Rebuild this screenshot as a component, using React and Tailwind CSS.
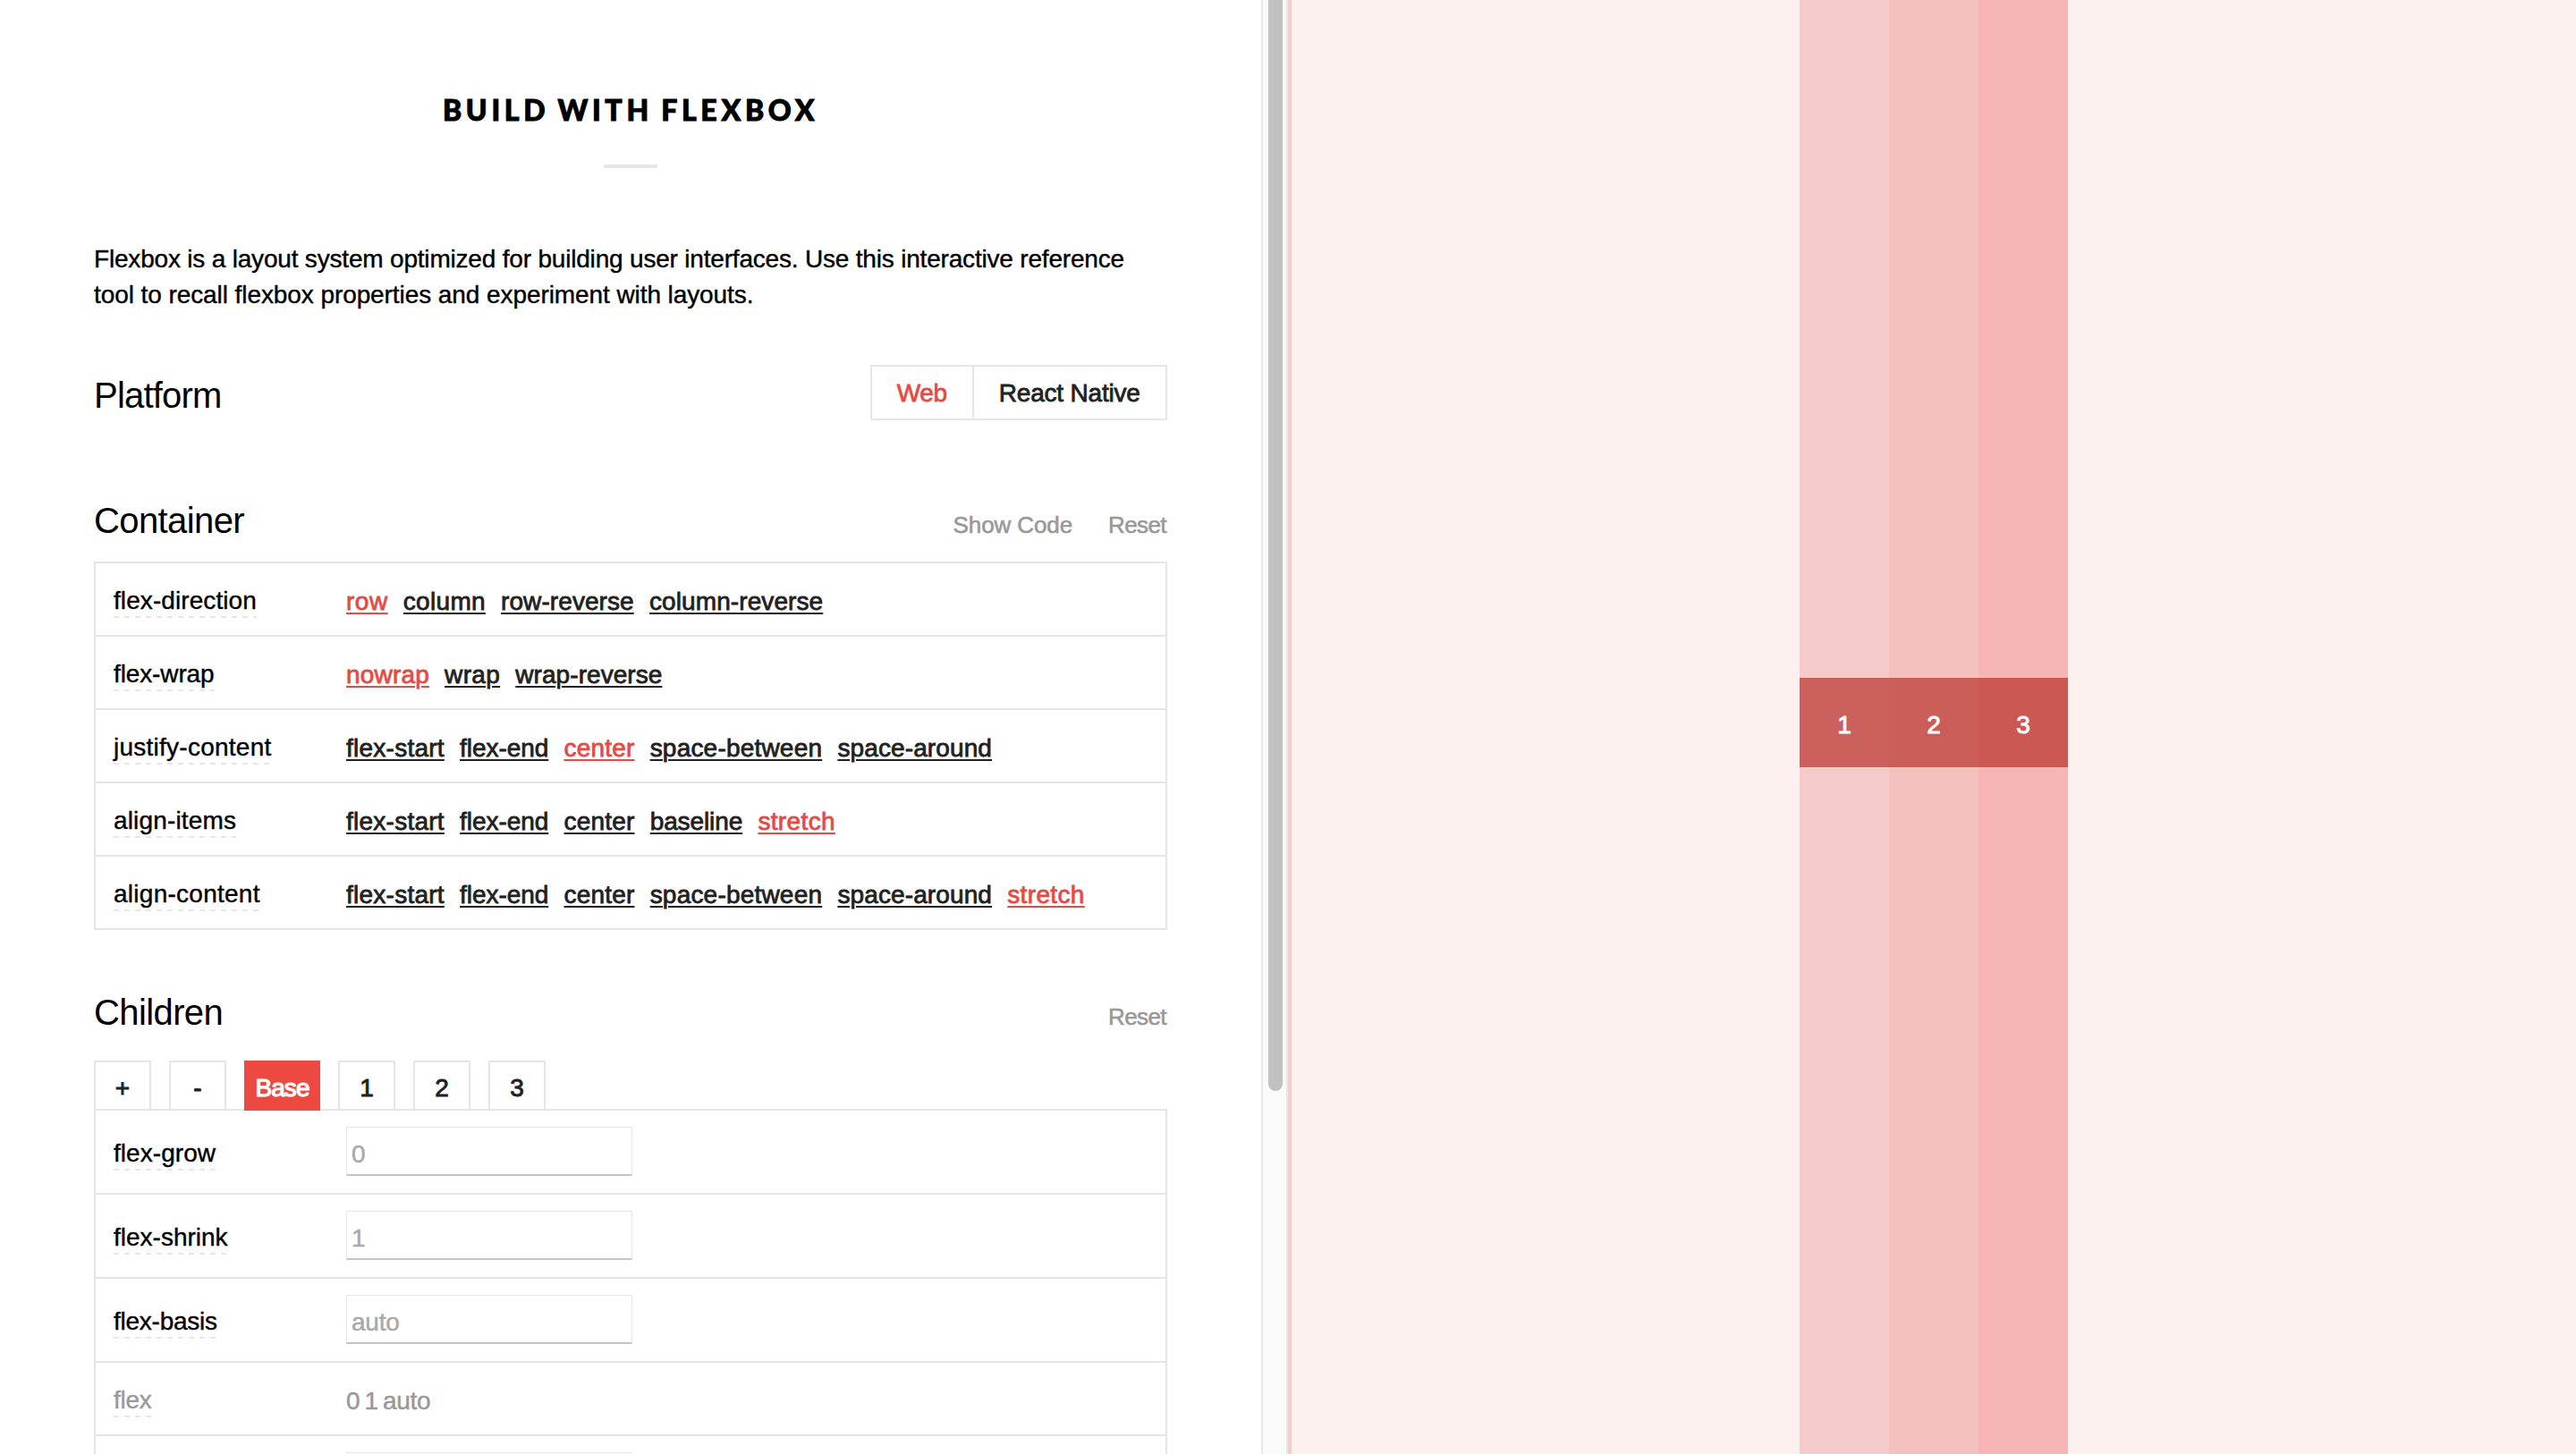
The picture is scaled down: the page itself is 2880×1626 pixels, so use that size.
import React from "react";

const containerRows = [
  {
    name: "flex-direction",
    tracking: "tracking-[0.08px]",
    selected: "row",
    options: [
      ["row", "tracking-[0.5px]"],
      ["column", "tracking-[0.3px]"],
      ["row-reverse", "tracking-[0.08px]"],
      ["column-reverse", "tracking-[0.1px]"],
    ],
  },
  {
    name: "flex-wrap",
    tracking: "tracking-[-0.12px]",
    selected: "nowrap",
    options: [
      ["nowrap", "tracking-[0.18px]"],
      ["wrap", "tracking-[0.33px]"],
      ["wrap-reverse", "tracking-[0.06px]"],
    ],
  },
  {
    name: "justify-content",
    tracking: "tracking-[0.25px]",
    selected: "center",
    options: [
      ["flex-start", "tracking-[0.25px]"],
      ["flex-end", "tracking-[-0.05px]"],
      ["center", "tracking-[0.2px]"],
      ["space-between", "tracking-[0.2px]"],
      ["space-around", "tracking-[0.12px]"],
    ],
  },
  {
    name: "align-items",
    tracking: "tracking-[0.15px]",
    selected: "stretch",
    options: [
      ["flex-start", "tracking-[0.25px]"],
      ["flex-end", "tracking-[-0.05px]"],
      ["center", "tracking-[0.2px]"],
      ["baseline", "tracking-[-0.1px]"],
      ["stretch", "tracking-[0.36px]"],
    ],
  },
  {
    name: "align-content",
    tracking: "tracking-[0.26px]",
    selected: "stretch",
    options: [
      ["flex-start", "tracking-[0.25px]"],
      ["flex-end", "tracking-[-0.05px]"],
      ["center", "tracking-[0.2px]"],
      ["space-between", "tracking-[0.2px]"],
      ["space-around", "tracking-[0.12px]"],
      ["stretch", "tracking-[0.36px]"],
    ],
  },
];

const childRows = [
  { name: "flex-grow", tracking: "tracking-[0.05px]", placeholder: "0" },
  { name: "flex-shrink", tracking: "tracking-[0px]", placeholder: "1" },
  { name: "flex-basis", tracking: "tracking-[-0.25px]", placeholder: "auto" },
];

const tabs = ["+", "-", "Base", "1", "2", "3"];

const previewItems = [
  { label: "1", column: "bg-[#f5caca]", box: "bg-[#ca615d]" },
  { label: "2", column: "bg-[#f4c1be]", box: "bg-[#ca5d58]" },
  { label: "3", column: "bg-[#f5b5b5]", box: "bg-[#cb5853]" },
];

function PropertyName({ children, tracking, muted }) {
  return (
    <div className="w-[260px] shrink-0">
      <span
        className={`inline-block h-[40px] bg-[repeating-linear-gradient(90deg,#e6e6e6_0_6px,transparent_6px_12px)] bg-[length:100%_2px] bg-bottom bg-no-repeat leading-[41px] [-webkit-text-stroke:0.4px] ${tracking} ${
          muted ? "text-[#999]" : "text-black"
        }`}
      >
        {children}
      </span>
    </div>
  );
}

function SectionHeader({ title, tracking, actions }) {
  return (
    <div className="flex h-[48px] items-baseline justify-between pr-[1px] leading-[48px]">
      <h2 className={`text-[40px] ${tracking}`}>{title}</h2>
      <div className="flex gap-[40px] text-[26px] text-[#999] [-webkit-text-stroke:0.6px]">
        {actions.map(([label, spacing]) => (
          <button key={label} className={`leading-[48px] ${spacing}`}>
            {label}
          </button>
        ))}
      </div>
    </div>
  );
}

function TextField({ placeholder }) {
  return (
    <input
      placeholder={placeholder}
      className="h-[55px] w-[320px] border border-[#e6e6e6] border-b-2 border-b-[#c4c4c4] bg-white px-[5px] pt-[7px] text-[28px] tracking-[-0.2px] [-webkit-text-stroke:0.5px] placeholder:text-[#a9a9a9] placeholder:opacity-100"
    />
  );
}

export default function App() {
  return (
    <div className="flex h-[1626px] w-[2880px] overflow-hidden bg-white font-['Liberation_Sans',Arial,sans-serif] text-[28px] text-black">
      <main className="h-full w-[1410px] shrink-0 overflow-hidden pl-[105px]">
        <div className="w-[1200px]">
          <header className="flex flex-col items-center pt-[98px]">
            <h1 className="h-[48px] whitespace-nowrap font-['Lato',sans-serif] text-[32px] font-black leading-[49px] tracking-[4.7px] [-webkit-text-stroke:1px] [word-spacing:-3px]">
              BUILD WITH FLEXBOX
            </h1>
            <div className="mt-[38px] h-[4px] w-[60px] bg-[#e6e6e6]" />
          </header>

          <p className="mt-[82px] h-[80px] whitespace-nowrap leading-[40px] [-webkit-text-stroke:0.4px]">
            <span className="tracking-[-0.19px]">
              Flexbox is a layout system optimized for building user interfaces. Use this interactive reference
            </span>
            <br />
            <span className="tracking-[-0.08px]">tool to recall flexbox properties and experiment with layouts.</span>
          </p>

          <section className="mt-[58px] flex h-[62px] justify-between">
            <h2 className="pt-[10px] text-[40px] leading-[48px] tracking-[-0.8px]">Platform</h2>
            <div className="flex w-[332px] border-2 border-[#e6e6e6] leading-[40px] [-webkit-text-stroke:0.8px]">
              <button className="w-[113.5px] border-r-2 border-[#e6e6e6] pt-[2px] tracking-[-0.3px] text-[#e64a43]">Web</button>
              <button className="flex-1 pt-[2px] tracking-[-0.2px] text-[#212121]">React Native</button>
            </div>
          </section>

          <section className="mt-[88px]">
            <SectionHeader
              title="Container"
              tracking="tracking-[-0.6px]"
              actions={[
                ["Show Code", "tracking-[-0.1px]"],
                ["Reset", "tracking-[-0.6px]"],
              ]}
            />
            <div className="mt-[22px] border-2 border-b-0 border-[#e6e6e6]">
              {containerRows.map((row) => (
                <div key={row.name} className="flex h-[82px] border-b-2 border-[#e6e6e6] pl-[20px] pt-[21px]">
                  <PropertyName tracking={row.tracking}>{row.name}</PropertyName>
                  <div className="flex gap-[17.2px] leading-[43px] [-webkit-text-stroke:0.8px]">
                    {row.options.map(([option, tracking]) => (
                      <button
                        key={option}
                        className={`h-[43px] underline decoration-2 underline-offset-[3px] ${tracking} ${
                          option === row.selected ? "text-[#e64a43]" : "text-[#212121]"
                        }`}
                      >
                        {option}
                      </button>
                    ))}
                  </div>
                </div>
              ))}
            </div>
          </section>

          <section className="mt-[68px]">
            <SectionHeader title="Children" tracking="tracking-[-0.6px]" actions={[["Reset", "tracking-[-0.6px]"]]} />
            <div className="-mb-[2px] mt-[30px] flex gap-[20px]">
              {tabs.map((tab) =>
                tab === "Base" ? (
                  <button
                    key={tab}
                    className="relative h-[56px] w-[85px] bg-[#ec4941] pt-[5px] leading-[40px] tracking-[-0.9px] text-white [-webkit-text-stroke:1.2px]"
                  >
                    {tab}
                  </button>
                ) : (
                  <button
                    key={tab}
                    className="h-[56px] w-[64px] border-2 border-[#e6e6e6] pt-[5px] leading-[40px] text-[#212121] [-webkit-text-stroke:0.9px]"
                  >
                    {tab}
                  </button>
                )
              )}
            </div>
            <div className="border-2 border-b-0 border-[#e6e6e6]">
              {childRows.map((row) => (
                <div key={row.name} className="flex h-[94px] border-b-2 border-[#e6e6e6] pl-[20px]">
                  <div className="pt-[27px]">
                    <PropertyName tracking={row.tracking}>{row.name}</PropertyName>
                  </div>
                  <div className="flex pt-[18px]">
                    <TextField placeholder={row.placeholder} />
                  </div>
                </div>
              ))}
              <div className="flex h-[82px] border-b-2 border-[#e6e6e6] pl-[20px] pt-[21px]">
                <PropertyName tracking="tracking-[-0.25px]" muted>
                  flex
                </PropertyName>
                <span className="leading-[43px] tracking-[-0.3px] text-[#999] [-webkit-text-stroke:0.5px] [word-spacing:-2.3px]">
                  0 1 auto
                </span>
              </div>
              <div className="flex h-[94px] pl-[280px] pt-[18px]">
                <TextField placeholder="auto" />
              </div>
            </div>
          </section>
        </div>
      </main>

      <div className="flex h-full w-[30px] shrink-0 border-x-2 border-[#e8e8e8] bg-[#fafafa] pl-[6px]">
        <div className="h-[1220px] w-[16px] rounded-b-full bg-[#c1c1c1]" />
      </div>

      <aside className="flex h-full flex-1 justify-center border-l-4 border-[#f5cccc] bg-[#fdf1ef]">
        {previewItems.map((item) => (
          <div key={item.label} className={`flex h-full w-[100px] items-center pb-[10px] ${item.column}`}>
            <div
              className={`flex h-[100px] w-[100px] justify-center pt-[3px] leading-[100px] text-white [-webkit-text-stroke:0.9px] ${item.box}`}
            >
              {item.label}
            </div>
          </div>
        ))}
      </aside>
    </div>
  );
}
